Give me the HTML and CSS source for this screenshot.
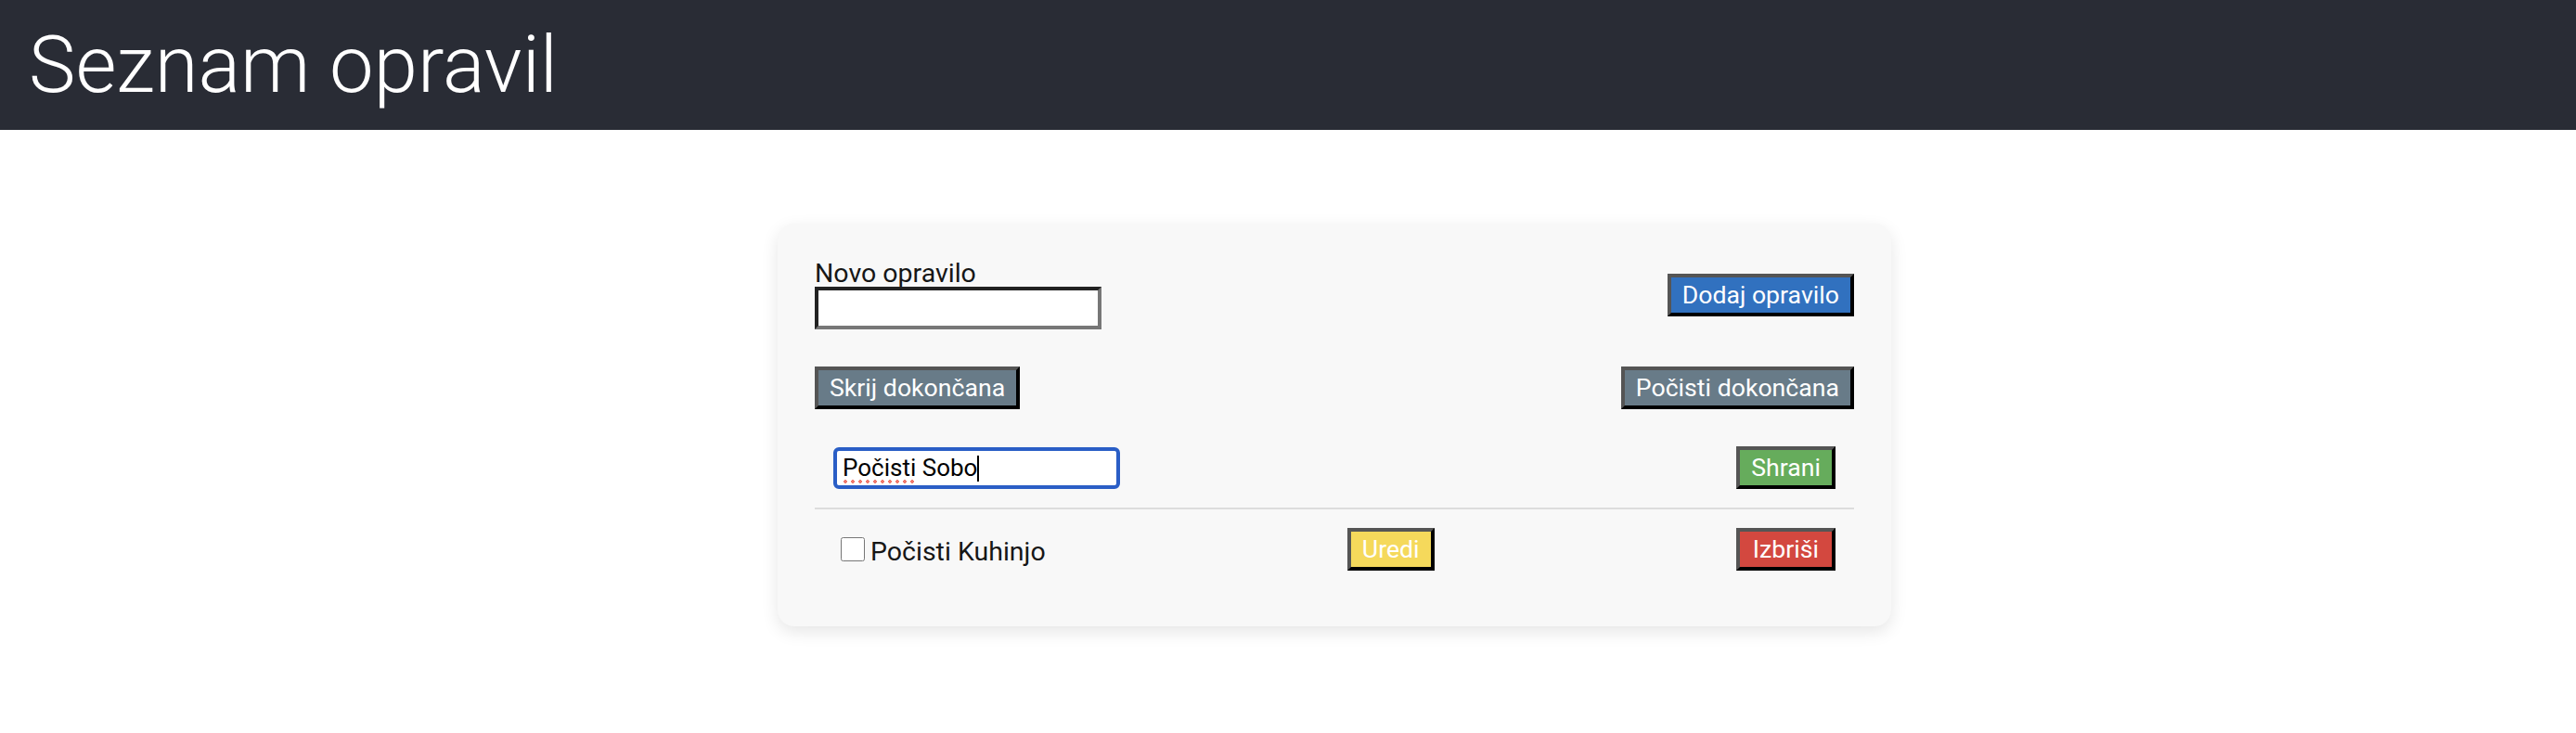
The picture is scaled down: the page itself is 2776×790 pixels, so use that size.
FILE: index.html
```html
<!DOCTYPE html>
<html lang="sl">
<head>
<meta charset="utf-8">
<title>Seznam opravil</title>
<link rel="stylesheet" href="styles.css">
</head>
<body>
<header class="topbar">
  <h1 class="title">Seznam opravil</h1>
</header>
<main class="page">
  <section class="card">
    <div class="row add-row">
      <div class="field">
        <label class="field-label" for="new-task">Novo opravilo</label>
        <input id="new-task" class="text-input" type="text">
      </div>
      <button class="btn btn-blue">Dodaj opravilo</button>
    </div>
    <div class="row tools-row">
      <button class="btn btn-gray">Skrij dokončana</button>
      <button class="btn btn-gray">Počisti dokončana</button>
    </div>
    <ul class="list">
      <li class="item item-editing">
        <div class="edit-wrap">
          <input class="edit-input" type="text" value="Počisti Sobo" spellcheck="false">
          <span class="spell-mark"></span>
          <span class="caret"></span>
        </div>
        <button class="btn btn-green">Shrani</button>
      </li>
      <li class="item">
        <label class="check">
          <input class="check-box" type="checkbox">
          <span class="check-text">Počisti Kuhinjo</span>
        </label>
        <button class="btn btn-yellow">Uredi</button>
        <button class="btn btn-red">Izbriši</button>
      </li>
    </ul>
  </section>
</main>
</body>
</html>
```
FILE: styles.css
```css
* { box-sizing: border-box; }
html, body { margin: 0; padding: 0; background: #ffffff; }
body { font-family: Roboto, "Noto Sans", "Liberation Sans", sans-serif; color: #161616; }

.topbar {
  height: 140px;
  background: #292c35;
  display: flex;
  align-items: center;
  padding-left: 31px;
}
.title {
  margin: 0;
  font-size: 85px;
  font-weight: 300;
  color: #ffffff;
  line-height: 1;
}

.page { padding-top: 101px; padding-bottom: 40px; }

.card {
  width: 1200px;
  margin-left: 838px;
  background: #f8f8f8;
  border-radius: 18px;
  padding: 40px;
  box-shadow: 0 6px 18px rgba(0, 0, 0, 0.10);
}

.row {
  display: flex;
  justify-content: space-between;
  align-items: center;
}
.tools-row { margin-top: 40px; }

.field { display: flex; flex-direction: column; }
.field-label {
  font-size: 28.5px;
  line-height: 28px;
  color: #161616;
}
.text-input {
  width: 309px;
  height: 46px;
  margin: 0;
  background: #ffffff;
  border: 4px solid;
  border-color: #222222 #777777 #777777 #222222;
  font: inherit;
  font-size: 26px;
  padding: 2px 4px;
}

.btn {
  font-family: inherit;
  font-size: 26.67px;
  line-height: 34px;
  height: 46px;
  padding: 2px 12px;
  margin: 0;
  color: #ffffff;
  border: 4px solid;
  border-color: #555555 #000000 #000000 #555555;
  white-space: nowrap;
}
.btn-blue { background: #3171bf; }
.btn-gray { background: #687b88; }
.btn-green { background: #66ac5c; }
.btn-yellow { background: #f5d95b; }
.btn-red { background: #d3483f; padding: 2px 14px; }

.list {
  list-style: none;
  margin: 20px 0 0;
  padding: 0;
}
.item {
  display: flex;
  justify-content: space-between;
  align-items: center;
  padding: 20px;
}
.item-editing { border-bottom: 2px solid #dddddd; }

.edit-wrap { position: relative; }
.edit-input {
  display: block;
  width: 309px;
  height: 45px;
  margin: 0;
  padding: 2px 6px;
  border: 4px solid #2a5ec6;
  border-radius: 6px;
  background: #ffffff;
  font: inherit;
  font-size: 26px;
  color: #000000;
  outline: none;
}
.spell-mark {
  position: absolute;
  left: 9px;
  top: 35px;
  width: 78px;
  height: 4px;
  background-image: radial-gradient(circle, #f07a6e 1.6px, transparent 1.8px);
  background-size: 8px 4px;
  background-repeat: repeat-x;
}
.caret {
  position: absolute;
  left: 155px;
  top: 9px;
  width: 2px;
  height: 28px;
  background: #000000;
}

.check {
  display: flex;
  align-items: center;
  font-size: 28.5px;
  line-height: 34px;
  color: #161616;
}
.check-box {
  width: 26px;
  height: 26px;
  margin: 6px 6px 6px 8px;
}
.check-text { padding-top: 5px; }
```
